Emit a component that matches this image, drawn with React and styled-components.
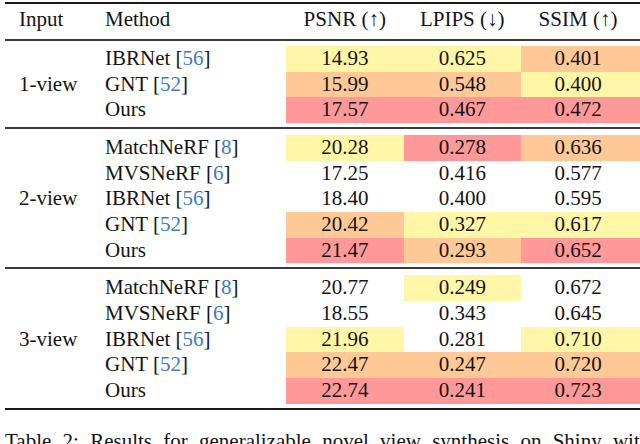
import React from "react";
import styled, { createGlobalStyle } from "styled-components";

const GlobalStyle = createGlobalStyle`
  html, body {
    margin: 0;
    padding: 0;
    background: #ffffff;
    overflow: hidden;
  }
  body {
    font-family: "Liberation Serif", "Times New Roman", "DejaVu Serif", serif;
    color: #141414;
  }
`;

const COLORS = {
  y: "#fff6a8",
  o: "#ffc997",
  r: "#ff9898",
};

const groups = [
  {
    label: "1-view",
    rows: [
      { method: "IBRNet", cite: "56", values: [["14.93", "y"], ["0.625", "y"], ["0.401", "o"]] },
      { method: "GNT", cite: "52", values: [["15.99", "o"], ["0.548", "o"], ["0.400", "y"]] },
      { method: "Ours", values: [["17.57", "r"], ["0.467", "r"], ["0.472", "r"]] },
    ],
  },
  {
    label: "2-view",
    rows: [
      { method: "MatchNeRF", cite: "8", values: [["20.28", "y"], ["0.278", "r"], ["0.636", "o"]] },
      { method: "MVSNeRF", cite: "6", values: [["17.25"], ["0.416"], ["0.577"]] },
      { method: "IBRNet", cite: "56", values: [["18.40"], ["0.400"], ["0.595"]] },
      { method: "GNT", cite: "52", values: [["20.42", "o"], ["0.327", "y"], ["0.617", "y"]] },
      { method: "Ours", values: [["21.47", "r"], ["0.293", "o"], ["0.652", "r"]] },
    ],
  },
  {
    label: "3-view",
    rows: [
      { method: "MatchNeRF", cite: "8", values: [["20.77"], ["0.249", "y"], ["0.672"]] },
      { method: "MVSNeRF", cite: "6", values: [["18.55"], ["0.343"], ["0.645"]] },
      { method: "IBRNet", cite: "56", values: [["21.96", "y"], ["0.281"], ["0.710", "y"]] },
      { method: "GNT", cite: "52", values: [["22.47", "o"], ["0.247", "o"], ["0.720", "o"]] },
      { method: "Ours", values: [["22.74", "r"], ["0.241", "r"], ["0.723", "r"]] },
    ],
  },
];

export default function App() {
  return (
    <>
      <GlobalStyle />
      <Page>
        <Rule $thick />
        <HeaderGrid>
          <HeadCell>Input</HeadCell>
          <HeadCell>Method</HeadCell>
          <HeadCell $center>PSNR (↑)</HeadCell>
          <HeadCell $center>LPIPS (↓)</HeadCell>
          <HeadCell $center $last>SSIM (↑)</HeadCell>
        </HeaderGrid>
        <Rule />
        {groups.map((g, gi) => (
          <React.Fragment key={g.label}>
            <Section $first={gi === 0}>
              <GroupLabel style={{ gridRow: `1 / span ${g.rows.length}` }}>
                {g.label}
              </GroupLabel>
              {g.rows.map((r, ri) => (
                <React.Fragment key={ri}>
                  <MethodCell>
                    {r.method}
                    {r.cite && (
                      <>
                        {" "}[<Cite>{r.cite}</Cite>]
                      </>
                    )}
                  </MethodCell>
                  {r.values.map(([v, c], vi) => (
                    <ValueCell key={vi} $bg={c} $last={vi === 2}>
                      {v}
                    </ValueCell>
                  ))}
                </React.Fragment>
              ))}
            </Section>
            <Rule $thick={gi === groups.length - 1} />
          </React.Fragment>
        ))}
        <Caption>
          Table 2: Results for generalizable novel view synthesis on Shiny with
        </Caption>
      </Page>
    </>
  );
}

const Page = styled.div`
  width: 640px;
  height: 444px;
  padding: 2px 0 0 5px;
  box-sizing: border-box;
  overflow: hidden;
  font-size: 21px;
`;

const Rule = styled.div`
  height: 2px;
  background: ${(p) => (p.$thick ? "#1a1a1a" : "#3a3a3a")};
  margin-right: -10px;
`;

const columns = "90px 191px 117.5px 117.5px 1fr";

const HeaderGrid = styled.div`
  display: grid;
  grid-template-columns: ${columns};
  height: 35px;
  padding-top: 3px;
  box-sizing: border-box;
`;

const HeadCell = styled.div`
  line-height: 25.67px;
  white-space: nowrap;
  text-align: ${(p) => (p.$center ? "center" : "left")};
  padding-left: ${(p) => (p.$center ? "0" : p.children === "Input" ? "14px" : "10px")};
  padding-right: ${(p) => (p.$last ? "5px" : "0")};
`;

const Section = styled.div`
  display: grid;
  grid-template-columns: ${columns};
  grid-auto-rows: 25.67px;
  padding-top: ${(p) => (p.$first ? "5px" : "6px")};
  padding-bottom: 4px;
`;

const GroupLabel = styled.div`
  grid-column: 1;
  align-self: center;
  padding-left: 14px;
  line-height: 25.67px;
  white-space: nowrap;
`;

const MethodCell = styled.div`
  grid-column: 2;
  padding-left: 10px;
  line-height: 25.67px;
  white-space: nowrap;
`;

const Cite = styled.span`
  color: #3d7cc0;
`;

const ValueCell = styled.div`
  line-height: 25.67px;
  text-align: center;
  background: ${(p) => (p.$bg ? COLORS[p.$bg] : "transparent")};
  padding-right: ${(p) => (p.$last ? "5px" : "0")};
`;

const Caption = styled.div`
  margin-top: 19px;
  line-height: 25.67px;
  white-space: nowrap;
  word-spacing: 6px;
`;
